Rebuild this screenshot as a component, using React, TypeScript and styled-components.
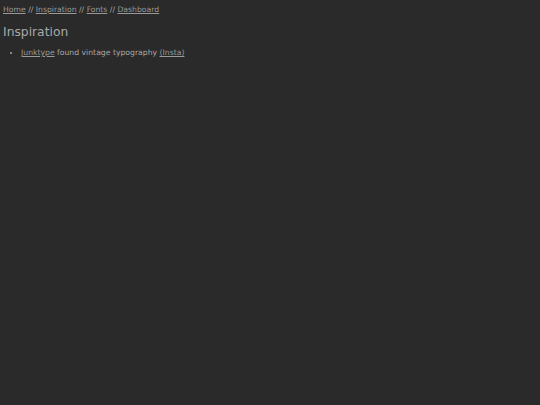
import React from "react";
import styled, { createGlobalStyle } from "styled-components";

const Global = createGlobalStyle`
  html, body { margin: 0; padding: 0; background: #2a2a2a; }
  body { font-family: "DejaVu Sans", "Liberation Sans", sans-serif; color: #a8a8a8; }
`;

const Page = styled.div`
  padding: 4px 3px;
`;

const Crumbs = styled.nav`
  font-size: 7.7px;
  line-height: 12px;
`;

const Link = styled.a`
  color: #999999;
  text-decoration: underline;
`;

const Title = styled.h1`
  font-size: 12.3px;
  font-weight: 500;
  margin: 8px 0 0;
  line-height: 16px;
  color: #a8a8a8;
`;

const List = styled.ul`
  margin: 7px 0 0;
  padding-left: 18px;
  font-size: 7.7px;
  line-height: 12px;
  li::marker { font-size: 8px; }
`;

export default function App() {
  return (
    <>
      <Global />
      <Page>
        <Crumbs>
          <Link href="#">Home</Link> // <Link href="#">Inspiration</Link> // <Link href="#">Fonts</Link> // <Link href="#">Dashboard</Link>
        </Crumbs>
        <Title>Inspiration</Title>
        <List>
          <li>
            <Link href="#">Junktype</Link> found vintage typography <Link href="#">(Insta)</Link>
          </li>
        </List>
      </Page>
    </>
  );
}
